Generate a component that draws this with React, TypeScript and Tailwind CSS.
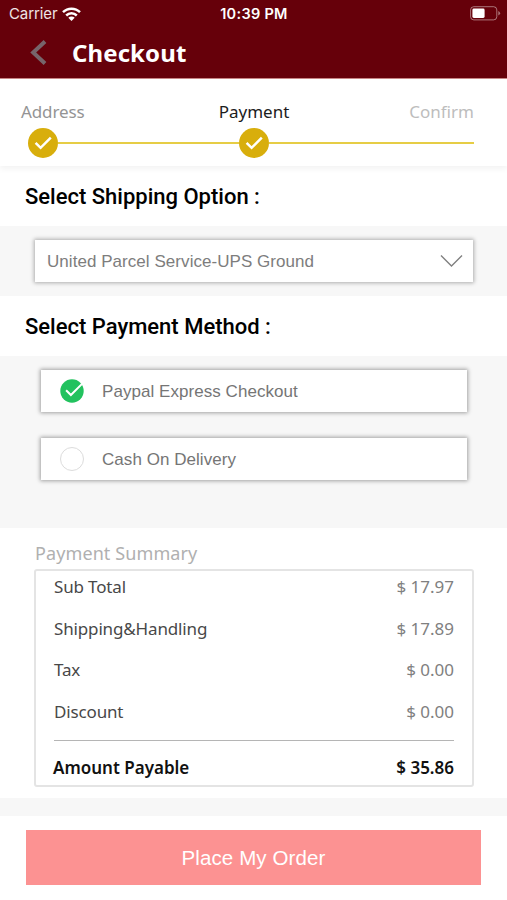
import { useState } from "react";

const summary = [
    { label: "Sub Total", value: "$ 17.97" },
    { label: "Shipping&Handling", value: "$ 17.89" },
    { label: "Tax", value: "$ 0.00" },
    { label: "Discount", value: "$ 0.00" },
];

const methods = ["Paypal Express Checkout", "Cash On Delivery"];

function WifiIcon() {
    return (
        <svg width="19" height="14" viewBox="0 0 19 14" fill="none" stroke="#fff" strokeWidth="2.5">
            <path d="M1 5.2a12.1 12.1 0 0 1 17 0" />
            <path d="M4.2 8.5a7.6 7.6 0 0 1 10.6 0" />
            <path d="M9.5 14 6.3 10.8a4.5 4.5 0 0 1 6.4 0z" fill="#fff" stroke="none" />
        </svg>
    );
}

function BatteryIcon() {
    return (
        <svg width="31" height="15" viewBox="0 0 31 15" fill="none">
            <rect x="0.6" y="0.7" width="26.2" height="13.2" rx="3.2" stroke="#fff" strokeOpacity="0.45" />
            <rect x="2.4" y="2.6" width="12.2" height="9.4" rx="1.4" fill="#fff" />
            <path d="M28.3 5v4.6q1.8-.8 1.8-2.3T28.3 5z" fill="#fff" fillOpacity="0.45" />
        </svg>
    );
}

function StepDot() {
    return (
        <svg className="shrink-0" width="30" height="30" viewBox="0 0 30 30" fill="none">
            <circle cx="15" cy="15" r="15" fill="#d8ae0c" />
            <path d="M7.6 14.8l5 5L22.8 9.6" stroke="#fff" strokeWidth="2.5" />
        </svg>
    );
}

function Radio({ checked }: { checked: boolean }) {
    if (!checked) {
        return <span className="block h-6 w-6 rounded-full border border-[#dcdcdc] bg-white" />;
    }
    return (
        <svg width="24" height="24" viewBox="0 0 24 24" fill="none">
            <circle cx="12" cy="12" r="11.7" fill="#22c25e" />
            <path d="M6.1 11.2l4.8 4.8L22 4.9" stroke="#fff" strokeWidth="2" />
        </svg>
    );
}

function SectionTitle({ children }: { children: string }) {
    return (
        <h2 className="flex h-[60px] items-center pl-[25px] font-['Roboto',sans-serif] text-[22px] font-medium text-black">
            {children}
        </h2>
    );
}

export default function App() {
    const [selected, setSelected] = useState(0);

    return (
        <div className="h-[900px] w-[507px] overflow-hidden bg-white font-['Noto_Sans',sans-serif]">
            <header className="h-[79px] border-b border-[#c98686] bg-[#66000a] text-white">
                <div className="grid h-[27px] grid-cols-3 items-center pr-[6px] pl-[7px] font-['Inter',sans-serif] text-[14.5px]">
                    <div className="flex items-center gap-[5px] pl-[2px]">
                        <span className="pt-px text-[15px] tracking-[-0.1px] text-white/90">Carrier</span>
                        <WifiIcon />
                    </div>
                    <span className="pt-px text-center font-semibold tracking-[0.3px]">10:39 PM</span>
                    <div className="flex justify-end">
                        <BatteryIcon />
                    </div>
                </div>
                <div className="flex h-[51px] items-center pl-[30px]">
                    <button aria-label="Back">
                        <svg width="17" height="26" viewBox="0 0 17 26" fill="none" stroke="#77656b" strokeWidth="4">
                            <path d="M15 1.5L3.2 12.5 15 23.5" />
                        </svg>
                    </button>
                    <h1 className="ml-[25px] text-[24px] font-bold tracking-[0.1px]">Checkout</h1>
                </div>
            </header>

            <div className="h-[87px] pt-[20px] pr-[33px] pl-[21px] shadow-[0_3px_6px_rgba(0,0,0,0.05)]">
                <div className="flex h-[29px] justify-between text-[17px] leading-[26px]">
                    <span className="w-[100px] tracking-[-0.1px] text-[#949494]">Address</span>
                    {/* nudged right so the label is centred over its dot */}
                    <span className="ml-[13px] text-center text-[#1c1c1c]">Payment</span>
                    <span className="w-[100px] text-right text-[#bdbdbd]">Confirm</span>
                </div>
                <div className="flex items-center pl-[7px]">
                    <StepDot />
                    <span className="h-[1.5px] w-[181px] bg-[#e6cd45]" />
                    <StepDot />
                    <span className="h-[1.5px] flex-1 bg-[#e6cd45]" />
                </div>
            </div>

            <SectionTitle>Select Shipping Option :</SectionTitle>
            <div className="h-[70px] bg-[#f7f7f7] pt-[14px] pr-[34px] pl-[35px]">
                <button className="flex h-[42px] w-full items-center justify-between bg-white pr-[10px] pl-[12px] font-['Liberation_Sans',sans-serif] text-[17px] text-[#7d7d7d] shadow-[0_0_4px_1px_rgba(0,0,0,0.3)]">
                    <span className="pt-[2px] tracking-[0.05px]">United Parcel Service-UPS Ground</span>
                    <svg width="23" height="14" viewBox="0 0 23 14" fill="none" stroke="#808080" strokeWidth="1.4">
                        <path d="M1 1.5l10.5 10.5L22 1.5" />
                    </svg>
                </button>
            </div>

            <SectionTitle>Select Payment Method :</SectionTitle>
            <div className="flex h-[172px] flex-col gap-[26px] bg-[#f7f7f7] pt-[14px] pr-[40px] pl-[41px]">
                {methods.map((name, i) => (
                    <button
                        key={name}
                        onClick={() => setSelected(i)}
                        className="flex h-[42px] w-full items-center gap-[18px] bg-white pl-[19px] font-['Liberation_Sans',sans-serif] text-[17px] text-[#757575] shadow-[0_0_4px_1px_rgba(0,0,0,0.35)]"
                    >
                        <Radio checked={selected === i} />
                        <span className="pt-[2px] tracking-[0.05px]">{name}</span>
                    </button>
                ))}
            </div>

            <div className="h-[270px] pt-[12px] pr-[33px] pl-[34px]">
                <h3 className="h-[29px] pl-px text-[18px] leading-[26px] tracking-[0.1px] text-[#b0b0b0]">
                    Payment Summary
                </h3>
                <div className="h-[218px] rounded-[3px] border-2 border-[#e4e4e4] px-[18px] text-[17px]">
                    {summary.map((row) => (
                        <div key={row.label} className="flex h-[41.5px] justify-between pt-[3px] leading-[25px]">
                            <span className="tracking-[-0.15px] text-[#484848]">{row.label}</span>
                            <span className="text-[#808080]">{row.value}</span>
                        </div>
                    ))}
                    <div className="mt-[3px] flex justify-between border-t-[1.5px] border-[#b5b5b5] pt-[14px] leading-[25px] font-semibold text-[#111]">
                        <span className="-ml-px">Amount Payable</span>
                        <span>$ 35.86</span>
                    </div>
                </div>
            </div>

            <div className="h-[18px] bg-[#f7f7f7]" />
            <div className="px-[26px] pt-[14px]">
                <button className="h-[55px] w-full bg-[#fc9292] pt-[2px] font-['Liberation_Sans',sans-serif] text-[20.5px] tracking-[0.1px] text-white">
                    Place My Order
                </button>
            </div>
        </div>
    );
}
